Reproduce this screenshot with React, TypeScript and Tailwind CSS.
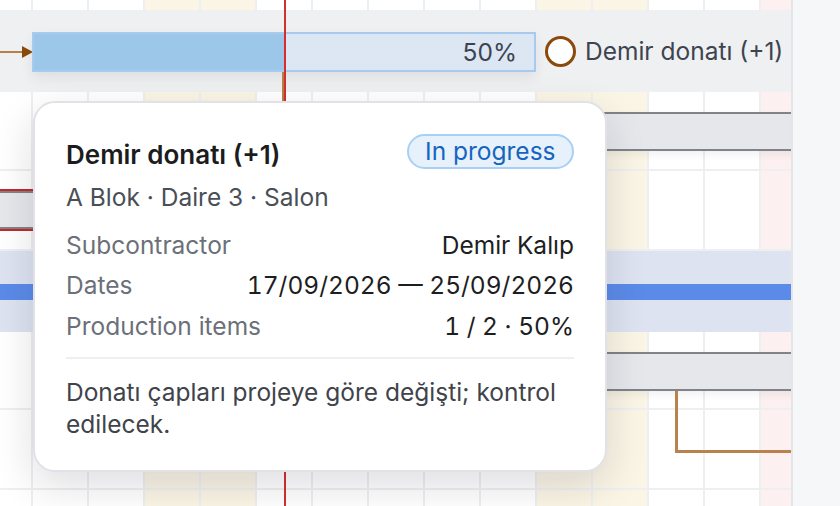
import React from 'react';

type Col = { w: number; kind: 'plain' | 'weekend' | 'holiday' };

const columns: Col[] = [
  { w: 33, kind: 'plain' },
  { w: 56, kind: 'plain' },
  { w: 56, kind: 'plain' },
  { w: 56, kind: 'weekend' },
  { w: 56, kind: 'weekend' },
  { w: 56, kind: 'plain' },
  { w: 56, kind: 'plain' },
  { w: 56, kind: 'plain' },
  { w: 56, kind: 'plain' },
  { w: 56, kind: 'plain' },
  { w: 56, kind: 'weekend' },
  { w: 56, kind: 'weekend' },
  { w: 56, kind: 'plain' },
  { w: 56, kind: 'plain' },
  { w: 30, kind: 'holiday' },
];

const colBg = (kind: Col['kind']) => {
  switch (kind) {
    case 'weekend': return 'bg-[#fbf5e5]';
    case 'holiday': return 'bg-[#fdf0f0]';
    default: return 'bg-white';
  }
};

const details = [
  { label: 'Subcontractor', value: 'Demir Kalıp' },
  { label: 'Dates', value: '17/09/2026 — 25/09/2026' },
  { label: 'Production items', value: '1 / 2 · 50%' },
];

function GridBackdrop() {
  return (
    <div className="absolute inset-0 flex">
      {columns.map((c, i) => (
        <div
          key={i}
          style={{ width: c.w }}
          className={`h-full shrink-0 border-r-2 border-[#eeeff1] last:border-r-0 ${colBg(c.kind)}`}
        />
      ))}
    </div>
  );
}

function GrayBar({ left, width }: { left: number; width: number }) {
  return (
    <div
      style={{ left, width }}
      className="absolute top-[20px] h-[39px] border-y-2 border-[#80838a] bg-[#e6e7eb] shadow-[0_4px_8px_rgba(0,0,0,0.06)]"
    />
  );
}

function Tooltip() {
  return (
    <div className="absolute left-[33px] top-[101px] w-[574px] h-[371px] rounded-[22px] border-2 border-[#e1e2e7] bg-white px-[31px] pt-[31px] shadow-[0_14px_40px_rgba(20,24,40,0.14)]">
      <div className="flex items-start justify-between">
        <div className="pt-[6px] text-[26px] leading-[30px] font-semibold text-[#1b1c20]">Demir donatı (+1)</div>
        <span className="inline-flex h-[35px] items-center rounded-full border-2 border-[#a9d0f4] bg-[#e6f1fc] px-[16.5px] text-[24.5px] text-[#1565c0]">
          In progress
        </span>
      </div>
      <div className="mt-[12px] text-[24.5px] leading-[30px] text-[#4a4f57]">A Blok · Daire 3 · Salon</div>
      <div className="mt-[13px] flex flex-col">
        {details.map((d) => (
          <div key={d.label} className="flex h-[40.5px] items-center justify-between text-[24.5px]">
            <span className="text-[#6b7079]">{d.label}</span>
            <span className="tabular-nums text-[#1d1e22]">{d.value}</span>
          </div>
        ))}
      </div>
      <div className="mt-[10px] h-[2px] bg-[#efeff2]" />
      <p className="mt-[17px] text-[24.5px] leading-[32px] text-[#3f444b]">
        Donatı çapları projeye göre değişti; kontrol edilecek.
      </p>
    </div>
  );
}

export default function App() {
  return (
    <div className="flex h-[506px] w-[840px] overflow-hidden bg-white font-['Inter',sans-serif]">
      <div className="relative w-[791px] shrink-0 overflow-hidden">
        <GridBackdrop />

        <div className="relative flex flex-col">
          <div className="h-[10px]" />

          {/* hovered task row */}
          <div className="relative h-[82px] bg-[#eff0f2]">
            <div className="absolute left-0 top-[41px] h-[2px] w-[24px] bg-[#b5804b]" />
            <div className="absolute left-[22px] top-[36px] h-0 w-0 border-y-[6px] border-l-[11px] border-y-transparent border-l-[#8b4a0c]" />
            <div className="absolute left-[32px] top-[22px] flex h-[40px] w-[504px] overflow-hidden border-2 border-[#a6cbee] bg-[#dce7f3] shadow-[0_6px_12px_rgba(0,0,0,0.07)]">
              <div className="h-full w-1/2 bg-[#9dc7e8]" />
              <div className="flex flex-1 items-center justify-end pr-[17px] text-[24.5px] text-[#3d4450]">50%</div>
            </div>
            <div className="absolute left-[282px] top-[62px] h-[30px] w-[2px] bg-[#b5804b]" />
            <div className="absolute left-[545px] top-[26px] h-[31px] w-[31px] rounded-full border-[3.5px] border-[#8b4a0c] bg-white" />
            <div className="absolute left-[585px] top-[26px] text-[24.5px] leading-[31px] text-[#3d4450]">Demir donatı (+1)</div>
          </div>

          <div className="relative h-[79px] border-b-2 border-[#eeeff1]">
            <GrayBar left={400} width={420} />
          </div>

          <div className="relative h-[80px] border-b-2 border-[#eeeff1]">
            <div className="absolute left-[-20px] top-[18px] w-[420px] border-y-2 border-[#c62828]">
              <div className="h-[38px] border-y-2 border-[#80838a] bg-[#e6e7eb]" />
            </div>
          </div>

          <div className="relative h-[81px] bg-[#dde3f1]">
            <div className="absolute left-0 right-0 top-[33px] h-[16px] bg-[#5b8be8]" />
          </div>

          <div className="relative h-[78px] border-b-2 border-[#eeeff1]">
            <GrayBar left={400} width={420} />
          </div>

          <div className="relative h-[80px] border-b-2 border-[#eeeff1]" />
          <div className="relative h-[80px]" />
        </div>

        {/* dependency elbow */}
        <div className="absolute left-[675px] top-[391px] h-[62px] w-[130px] border-b-[3px] border-l-[3px] border-[#b9824c]" />

        {/* today marker */}
        <div className="absolute left-[284px] top-0 h-full w-[2px] bg-[#d32f2f]" />

        <Tooltip />
      </div>
      <div className="w-[2px] shrink-0 bg-[#e4e5e9]" />
      <div className="flex-1 bg-[#f6f7f9]" />
    </div>
  );
}
